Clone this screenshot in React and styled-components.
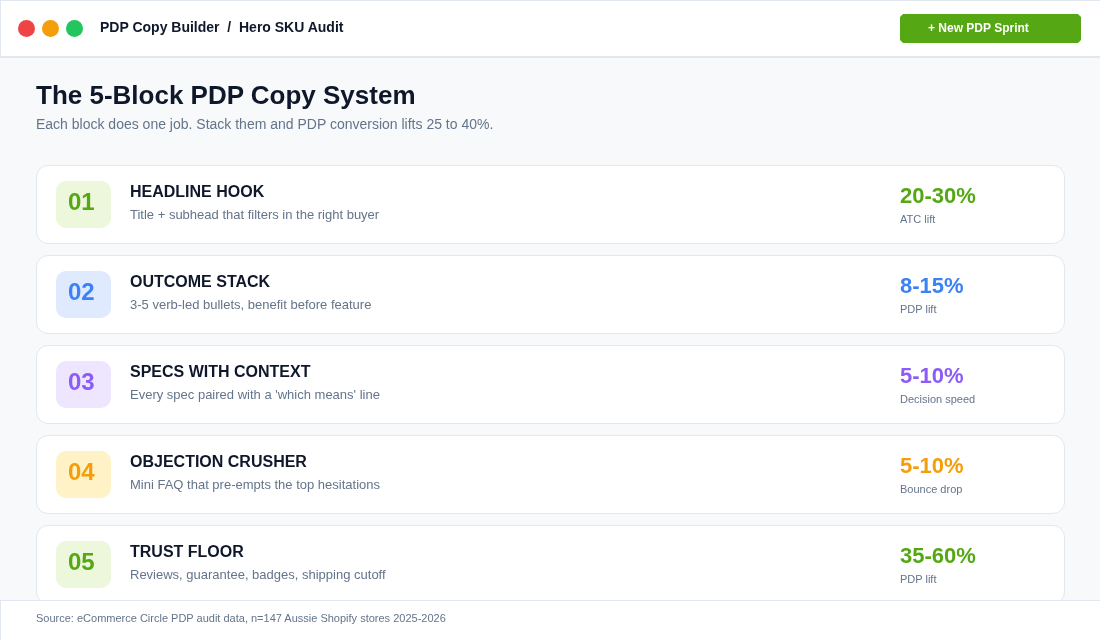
import React from "react";
import styled, { createGlobalStyle } from "styled-components";

const Global = createGlobalStyle`
  html, body { margin: 0; padding: 0; }
  body { font-family: "Liberation Sans", Arial, sans-serif; background: #f7f9fb; }
`;

const Page = styled.div`
  width: 1100px;
  height: 640px;
  display: flex;
  flex-direction: column;
  overflow: hidden;
  background: #f7f9fb;
  will-change: transform;
`;

const Header = styled.header`
  flex: 0 0 58px;
  box-sizing: border-box;
  display: flex;
  align-items: center;
  justify-content: space-between;
  padding: 0 19px 0 17px;
  background: #fff;
  border: 1px solid #e2e8f0;
  border-right-width: 0;
  border-bottom-width: 2px;
`;

const HeaderLeft = styled.div`
  display: flex;
  align-items: center;
`;

const Dots = styled.div`
  display: flex;
  gap: 7px;
  margin-right: 17px;
`;

const Dot = styled.span`
  width: 17px;
  height: 17px;
  border-radius: 50%;
  background: ${(p) => p.$color};
`;

const Crumb = styled.div`
  font-size: 14px;
  line-height: 16px;
  margin-top: -3px;
  font-weight: 700;
  color: #0f172a;
  white-space: pre;
`;

const SprintButton = styled.button`
  width: 181px;
  height: 29px;
  border: 0;
  padding: 0 0 2px 28px;
  text-align: left;
  background: #55a813;
  color: #fff;
  font-family: inherit;
  font-size: 12px;
  font-weight: 700;
  clip-path: polygon(
    3px 0,
    calc(100% - 3px) 0,
    100% 3px,
    100% calc(100% - 3px),
    calc(100% - 3px) 100%,
    3px 100%,
    0 calc(100% - 3px),
    0 3px
  );
`;

const Main = styled.main`
  flex: 1;
  min-height: 0;
  overflow: hidden;
  padding: 22px 35px 0 36px;
`;

const Title = styled.h1`
  margin: 0;
  font-size: 26px;
  line-height: 30px;
  font-weight: 700;
  color: #0f172a;
`;

const Subtitle = styled.p`
  margin: 4px 0 0;
  font-size: 14px;
  line-height: 20px;
  color: #64748b;
`;

const List = styled.div`
  display: flex;
  flex-direction: column;
  gap: 11px;
  margin-top: 31px;
`;

const Card = styled.article`
  box-sizing: border-box;
  height: 79px;
  flex: none;
  display: flex;
  padding: 15px 19px;
  background: #fff;
  border: 1px solid #e2e8f0;
  border-radius: 12px;
`;

const Badge = styled.div`
  flex: 0 0 55px;
  height: 47px;
  box-sizing: border-box;
  padding-left: 12px;
  border-radius: 10px;
  background: ${(p) => p.$bg};
  color: ${(p) => p.$color};
  font-size: 24px;
  font-weight: 700;
  line-height: 41px;
`;

const Body = styled.div`
  flex: 1;
  margin-left: 19px;
`;

const BlockName = styled.h2`
  margin: 2px 0 0;
  font-size: 16px;
  line-height: 18px;
  font-weight: 700;
  color: #0f172a;
`;

const BlockDesc = styled.p`
  margin: 6px 0 0;
  font-size: 13px;
  line-height: 16px;
  color: #64748b;
`;

const Metric = styled.div`
  flex: 0 0 145px;
`;

const MetricValue = styled.div`
  font-size: 22px;
  line-height: 30px;
  font-weight: 700;
  color: ${(p) => p.$color};
`;

const MetricLabel = styled.div`
  margin-top: 1px;
  font-size: 11px;
  line-height: 14px;
  color: #64748b;
`;

const Footer = styled.footer`
  flex: 0 0 40px;
  box-sizing: border-box;
  padding: 10px 35px 0;
  background: #fff;
  border: 1px solid #e2e8f0;
  border-width: 1px 0 0 1px;
  font-size: 11px;
  line-height: 14px;
  color: #64748b;
`;

const GREEN = { bg: "#ecf7dc", color: "#55a813" };
const BLUE = { bg: "#e0eafe", color: "#3b82f6" };
const PURPLE = { bg: "#ede6fe", color: "#8b5cf6" };
const AMBER = { bg: "#fef2c6", color: "#f59e0b" };

const blocks = [
  { n: "01", name: "HEADLINE HOOK", desc: "Title + subhead that filters in the right buyer", value: "20-30%", label: "ATC lift", tone: GREEN },
  { n: "02", name: "OUTCOME STACK", desc: "3-5 verb-led bullets, benefit before feature", value: "8-15%", label: "PDP lift", tone: BLUE },
  { n: "03", name: "SPECS WITH CONTEXT", desc: "Every spec paired with a 'which means' line", value: "5-10%", label: "Decision speed", tone: PURPLE },
  { n: "04", name: "OBJECTION CRUSHER", desc: "Mini FAQ that pre-empts the top hesitations", value: "5-10%", label: "Bounce drop", tone: AMBER },
  { n: "05", name: "TRUST FLOOR", desc: "Reviews, guarantee, badges, shipping cutoff", value: "35-60%", label: "PDP lift", tone: GREEN },
];

export default function App() {
  return (
    <Page>
      <Global />
      <Header>
        <HeaderLeft>
          <Dots>
            <Dot $color="#ef4444" />
            <Dot $color="#f59e0b" />
            <Dot $color="#22c55e" />
          </Dots>
          <Crumb>PDP Copy Builder  /  Hero SKU Audit</Crumb>
        </HeaderLeft>
        <SprintButton>+ New PDP Sprint</SprintButton>
      </Header>
      <Main>
        <Title>The 5-Block PDP Copy System</Title>
        <Subtitle>Each block does one job. Stack them and PDP conversion lifts 25 to 40%.</Subtitle>
        <List>
          {blocks.map((b) => (
            <Card key={b.n}>
              <Badge $bg={b.tone.bg} $color={b.tone.color}>{b.n}</Badge>
              <Body>
                <BlockName>{b.name}</BlockName>
                <BlockDesc>{b.desc}</BlockDesc>
              </Body>
              <Metric>
                <MetricValue $color={b.tone.color}>{b.value}</MetricValue>
                <MetricLabel>{b.label}</MetricLabel>
              </Metric>
            </Card>
          ))}
        </List>
      </Main>
      <Footer>Source: eCommerce Circle PDP audit data, n=147 Aussie Shopify stores 2025-2026</Footer>
    </Page>
  );
}
